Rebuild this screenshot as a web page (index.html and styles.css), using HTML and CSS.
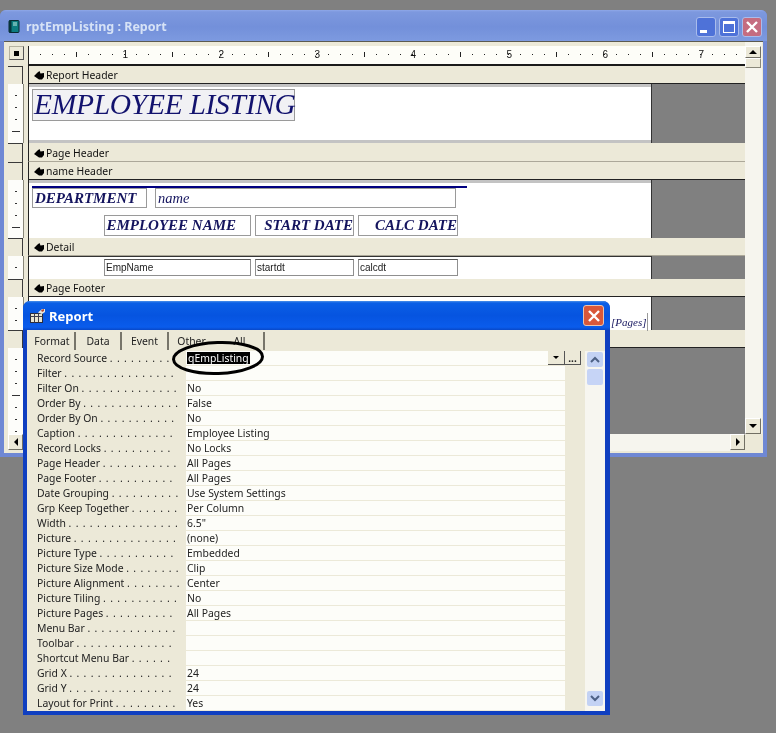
FILE: index.html
```html
<!DOCTYPE html>
<html lang="en">
<head>
<meta charset="utf-8">
<title>rptEmpListing : Report</title>
<link rel="stylesheet" href="styles.css">
</head>
<body>
<div class="desktop">

  <section class="report-win">
    <header class="win-title">
      <svg class="book" width="12" height="13" viewBox="0 0 12 13"><rect x="1" y="0.5" width="10" height="12" rx="1" fill="#0d7c80" stroke="#0a2a30"/><rect x="1" y="0.5" width="2.500" height="12" fill="#06343a"/><path d="M5 3h4M5 5h4" stroke="#bfe8e0"/></svg>
      <span class="win-name">rptEmpListing : Report</span>
      <div class="win-btns">
        <span class="wb wb-min"><i></i></span>
        <span class="wb wb-max"><i></i></span>
        <span class="wb wb-close"><svg width="16" height="16" viewBox="0 0 16 16"><path d="M3 3l10 10M13 3L3 13" stroke="#fff" stroke-width="2.400"/></svg></span>
      </div>
    </header>

    <div class="client">
      <div class="client-top">
        <div class="designer">
          <div class="h-ruler-row">
            <div class="corner"><i></i></div>
            <div class="h-ruler">
              <span>1</span><span>2</span><span>3</span><span>4</span><span>5</span><span>6</span><span>7</span>
            </div>
          </div>

          <div class="row"><div class="rule rule-bar"></div><div class="bar bar-18 bar-line"><svg class="hand" width="10" height="9" viewBox="0 0 10 9"><path d="M0 5L3.500 1.500 5.500 0 6.500 2.500 10 2 10 6 8 8.500 5 8.500z" fill="#000"/></svg>Report Header</div></div>

          <div class="row"><div class="rule rule-ticks"></div><div class="canvas c-59"><div class="paper strips">
            <div class="ctl title-ctl">EMPLOYEE LISTING</div>
          </div></div></div>

          <div class="row"><div class="rule rule-bar"></div><div class="bar bar-19"><svg class="hand" width="10" height="9" viewBox="0 0 10 9"><path d="M0 5L3.500 1.500 5.500 0 6.500 2.500 10 2 10 6 8 8.500 5 8.500z" fill="#000"/></svg>Page Header</div></div>

          <div class="row"><div class="rule rule-bar"></div><div class="bar bar-18 bar-line"><svg class="hand" width="10" height="9" viewBox="0 0 10 9"><path d="M0 5L3.500 1.500 5.500 0 6.500 2.500 10 2 10 6 8 8.500 5 8.500z" fill="#000"/></svg>name Header</div></div>

          <div class="row"><div class="rule rule-ticks"></div><div class="canvas c-58"><div class="paper strip-top">
            <div class="rule-line"></div>
            <div class="ctl dept-ctl">DEPARTMENT</div>
            <div class="ctl name-ctl">name</div>
            <div class="ctl head-ctl emp-col">EMPLOYEE NAME</div>
            <div class="ctl head-ctl start-col">START DATE</div>
            <div class="ctl head-ctl calc-col">CALC DATE</div>
          </div></div></div>

          <div class="row"><div class="rule rule-bar"></div><div class="bar bar-18"><svg class="hand" width="10" height="9" viewBox="0 0 10 9"><path d="M0 5L3.500 1.500 5.500 0 6.500 2.500 10 2 10 6 8 8.500 5 8.500z" fill="#000"/></svg>Detail</div></div>

          <div class="row"><div class="rule rule-ticks"></div><div class="canvas c-23"><div class="paper dark-top">
            <div class="ctl field-ctl emp-col">EmpName</div>
            <div class="ctl field-ctl start-col">startdt</div>
            <div class="ctl field-ctl calc-col">calcdt</div>
          </div></div></div>

          <div class="row"><div class="rule rule-bar"></div><div class="bar bar-18 bar-line"><svg class="hand" width="10" height="9" viewBox="0 0 10 9"><path d="M0 5L3.500 1.500 5.500 0 6.500 2.500 10 2 10 6 8 8.500 5 8.500z" fill="#000"/></svg>Page Footer</div></div>

          <div class="row"><div class="rule rule-ticks"></div><div class="canvas c-33"><div class="paper">
            <div class="ctl pages-ctl">[Pages]</div>
          </div></div></div>

          <div class="row"><div class="rule rule-bar"></div><div class="bar bar-18 bar-line"></div></div>

          <div class="row"><div class="rule rule-ticks"></div><div class="canvas c-86"></div></div>
        </div>

        <div class="v-scroll">
          <span class="sb-btn sb-v"><b class="tri tri-up"></b></span>
          <span class="sb-thumb"></span>
          <span class="sb-track"></span>
          <span class="sb-btn sb-v"><b class="tri tri-down"></b></span>
        </div>
      </div>

      <div class="h-scroll">
        <span class="sb-btn sb-h"><b class="tri tri-left"></b></span>
        <span class="sb-track"></span>
        <span class="sb-btn sb-h"><b class="tri tri-right"></b></span>
      </div>
    </div>
  </section>

  <section class="prop-win">
    <header class="prop-title">
      <svg class="prop-icon" width="16" height="15" viewBox="0 0 16 15"><rect x="0.500" y="5.500" width="12" height="9" fill="#e8e4d0" stroke="#2b2b3a"/><path d="M0.500 8.500h12M4.500 5.500v9M8.500 5.500v9" stroke="#3d3d4d"/><path d="M8 4.500L12 1h3v3l-3 2z" fill="#e8e8e0"/><path d="M11 2l3-1v2l-2 1z" fill="#b84a30"/></svg>
      <span class="prop-name">Report</span>
      <span class="prop-close"><svg width="16" height="16" viewBox="0 0 16 16"><path d="M3 3l10 10M13 3L3 13" stroke="#fff" stroke-width="2.400"/></svg></span>
    </header>
    <div class="prop-body">
      <nav class="tabs">
        <span class="tab tab-format">Format</span>
        <span class="tab tab-data">Data</span>
        <span class="tab tab-event">Event</span>
        <span class="tab tab-other">Other</span>
        <span class="tab tab-all">All</span>
      </nav>
      <div class="prop-main">
        <div class="sheet">
          <div class="prow"><span class="pl">Record Source <span class="dots">. . . . . . . . .</span></span><span class="pv"><mark class="sel">qEmpListing</mark><span class="combo"><span class="combo-btn"><b class="tri tri-down tri-small"></b></span><span class="combo-btn combo-dots">...</span></span></span></div>
          <div class="prow"><span class="pl">Filter <span class="dots">. . . . . . . . . . . . . . . .</span></span><span class="pv"></span></div>
          <div class="prow"><span class="pl">Filter On <span class="dots">. . . . . . . . . . . . . .</span></span><span class="pv">No</span></div>
          <div class="prow"><span class="pl">Order By <span class="dots">. . . . . . . . . . . . . .</span></span><span class="pv">False</span></div>
          <div class="prow"><span class="pl">Order By On <span class="dots">. . . . . . . . . . .</span></span><span class="pv">No</span></div>
          <div class="prow"><span class="pl">Caption <span class="dots">. . . . . . . . . . . . . .</span></span><span class="pv">Employee Listing</span></div>
          <div class="prow"><span class="pl">Record Locks <span class="dots">. . . . . . . . . .</span></span><span class="pv">No Locks</span></div>
          <div class="prow"><span class="pl">Page Header <span class="dots">. . . . . . . . . . .</span></span><span class="pv">All Pages</span></div>
          <div class="prow"><span class="pl">Page Footer <span class="dots">. . . . . . . . . . .</span></span><span class="pv">All Pages</span></div>
          <div class="prow"><span class="pl">Date Grouping <span class="dots">. . . . . . . . . .</span></span><span class="pv">Use System Settings</span></div>
          <div class="prow"><span class="pl">Grp Keep Together <span class="dots">. . . . . . .</span></span><span class="pv">Per Column</span></div>
          <div class="prow"><span class="pl">Width <span class="dots">. . . . . . . . . . . . . . . .</span></span><span class="pv">6.5"</span></div>
          <div class="prow"><span class="pl">Picture <span class="dots">. . . . . . . . . . . . . . .</span></span><span class="pv">(none)</span></div>
          <div class="prow"><span class="pl">Picture Type <span class="dots">. . . . . . . . . . .</span></span><span class="pv">Embedded</span></div>
          <div class="prow"><span class="pl">Picture Size Mode <span class="dots">. . . . . . . .</span></span><span class="pv">Clip</span></div>
          <div class="prow"><span class="pl">Picture Alignment <span class="dots">. . . . . . . .</span></span><span class="pv">Center</span></div>
          <div class="prow"><span class="pl">Picture Tiling <span class="dots">. . . . . . . . . . .</span></span><span class="pv">No</span></div>
          <div class="prow"><span class="pl">Picture Pages <span class="dots">. . . . . . . . . .</span></span><span class="pv">All Pages</span></div>
          <div class="prow"><span class="pl">Menu Bar <span class="dots">. . . . . . . . . . . . .</span></span><span class="pv"></span></div>
          <div class="prow"><span class="pl">Toolbar <span class="dots">. . . . . . . . . . . . . .</span></span><span class="pv"></span></div>
          <div class="prow"><span class="pl">Shortcut Menu Bar <span class="dots">. . . . . .</span></span><span class="pv"></span></div>
          <div class="prow"><span class="pl">Grid X <span class="dots">. . . . . . . . . . . . . . .</span></span><span class="pv">24</span></div>
          <div class="prow"><span class="pl">Grid Y <span class="dots">. . . . . . . . . . . . . . .</span></span><span class="pv">24</span></div>
          <div class="prow"><span class="pl">Layout for Print <span class="dots">. . . . . . . . .</span></span><span class="pv">Yes</span></div>
        </div>
        <div class="prop-scroll">
          <span class="xp-btn"><svg width="10" height="7" viewBox="0 0 10 7"><path d="M1 6l4-4 4 4" fill="none" stroke="#4d6185" stroke-width="2"/></svg></span>
          <span class="xp-thumb"></span>
          <span class="xp-track"></span>
          <span class="xp-btn"><svg width="10" height="7" viewBox="0 0 10 7"><path d="M1 1l4 4 4-4" fill="none" stroke="#4d6185" stroke-width="2"/></svg></span>
        </div>
      </div>
      <svg class="ellipse" width="96" height="38" viewBox="0 0 96 38"><ellipse cx="48" cy="19" rx="44.500" ry="15.500" transform="rotate(-2 48 19)" fill="none" stroke="#000" stroke-width="3"/></svg>
    </div>
  </section>

</div>
</body>
</html>
```

FILE: styles.css
```css
* { box-sizing: border-box; }

html, body {
  margin: 0;
  padding: 0;
  background: #808080;
}

.desktop {
  position: relative;
  width: 776px;
  height: 733px;
  overflow: hidden;
  background: #808080;
  font-family: "Noto Sans", "Liberation Sans", sans-serif;
  font-size: 10.4px;
  color: #111;
  filter: blur(0.35px);
}

/* ---------- report window ---------- */
.report-win {
  position: absolute;
  left: 0;
  top: 10px;
  width: 767px;
  height: 447px;
  display: flex;
  flex-direction: column;
  background: #6f88d4;
  border-radius: 6px 6px 0 0;
  padding: 0 4px 4px 4px;
}

.win-title {
  height: 31px;
  margin: 0 -4px;
  padding: 0 5px 0 8px;
  display: flex;
  align-items: center;
  gap: 6px;
  border-radius: 6px 6px 0 0;
  background: linear-gradient(#8fa8e8 0, #7d98de 2px, #7390da 55%, #7d9ae0 100%);
}

.book { flex: none; margin-top: 2px; }

.win-name {
  font-family: "Noto Sans", sans-serif;
  font-weight: 700;
  font-size: 12.5px;
  line-height: 16px;
  color: #d6e2f6;
  margin-top: 3px;
}

.win-btns {
  margin-left: auto;
  display: flex;
  gap: 3px;
  margin-top: 3px;
}

.wb {
  width: 20px;
  height: 20px;
  border-radius: 3px;
  border: 1px solid #a9bcec;
  display: flex;
  align-items: center;
  justify-content: center;
  background: #4e72d8;
  position: relative;
}

.wb-close { background: #c56c80; }

.wb-min i {
  width: 7px;
  height: 3px;
  background: #fff;
  align-self: flex-end;
  margin: 0 5px 3px 0;
}

.wb-max i {
  width: 12px;
  height: 12px;
  border: 1px solid #fff;
  border-top-width: 3px;
}

.client {
  flex: 1;
  display: flex;
  flex-direction: column;
  background: #ece9d8;
  min-height: 0;
  border-top: 1px solid #5b5a50;
  padding-right: 1px;
}

.client-top {
  height: 392px;
  display: flex;
}

.designer {
  width: 741px;
  display: flex;
  flex-direction: column;
  flex: none;
}

.h-ruler-row {
  height: 24px;
  display: flex;
  flex: none;
}

.corner {
  width: 15px;
  height: 14px;
  margin: 4px 0 0 5px;
  display: flex;
  align-items: center;
  justify-content: center;
  background: #ece9d8;
  border: 1px solid #b5b2a0;
  border-right-color: #555;
  border-bottom-color: #555;
}

.corner i {
  width: 5px;
  height: 5px;
  background: #000;
}

.h-ruler {
  margin: 4px 0 0 4px;
  flex: 1;
  display: flex;
  padding-left: 3px;
  height: 20px;
  background-color: #fdfdf8;
  border-left: 1px solid #222;
  border-bottom: 2px solid #1a1a1a;
  background-image:
    linear-gradient(to right, transparent 47px, #222 47px, #222 48px, transparent 48px),
    linear-gradient(to right, transparent 11px, #222 11px, #222 12px);
  background-size: 96px 5px, 12px 1px;
  background-position: 0 6px, 0 8px;
  background-repeat: repeat-x, repeat-x;
}

.h-ruler span {
  width: 96px;
  flex: none;
  text-align: right;
  font-family: "Liberation Sans", sans-serif;
  font-size: 10px;
  line-height: 17px;
  color: #111;
}

.row {
  display: flex;
  flex: none;
}

.rule {
  width: 20px;
  margin-left: 4px;
  flex: none;
  border-right: 1px solid #777;
  background-color: #ece9d8;
}

.rule-bar {
  background: linear-gradient(#3a3a3a, #3a3a3a) 0 0 / 15px 1px no-repeat,
              linear-gradient(#3a3a3a, #3a3a3a) 14px 0 / 1px 100% no-repeat,
              #ece9d8;
  border-right: 1px solid #ece9d8;
}

.rule-ticks {
  width: 15px;
  margin-right: 5px;
  background-color: #fdfdfa;
  background-image:
    linear-gradient(to bottom, transparent 11px, #333 11px, #333 12px),
    linear-gradient(to bottom, transparent 47px, #333 47px, #333 48px);
  background-size: 2px 12px, 8px 48px;
  background-position: 7px 0, 4px 0;
  background-repeat: repeat-y;
  border-right: 0;
  box-shadow: 1px 0 0 #8a887a;
}

.bar {
  width: 717px;
  flex: none;
  display: flex;
  align-items: center;
  gap: 2px;
  padding: 2px 0 0 5px;
  background: #ece9d8;
  border-left: 1px solid #222;
  border-bottom: 1px solid #aca899;
  font-size: 10.4px;
  line-height: 1;
  color: #111;
}

.bar-18 { height: 18px; }
.bar-19 { height: 19px; padding-top: 3px; }
.bar-line { border-bottom-color: #222; }

.hand { flex: none; }

.canvas {
  width: 717px;
  flex: none;
  display: flex;
  background: #808080;
  border-left: 1px solid #222;
}

.c-59 { height: 59px; }
.c-58 { height: 58px; }
.c-23 { height: 23px; }
.c-33 { height: 33px; }
.c-86 { height: 86px; }

.paper {
  position: relative;
  width: 623px;
  height: 100%;
  flex: none;
  background: #fff;
  border-right: 1px solid #333;
}

.strips { box-shadow: inset 0 3px #c3c3c3, inset 0 -3px #c3c3c3; }
.strip-top { box-shadow: inset 0 3px #c3c3c3; }
.dark-top { box-shadow: inset 0 1px #333; }

.ctl {
  position: absolute;
  display: flex;
  align-items: center;
  white-space: nowrap;
  border: 1px solid #9a9a9a;
}

.title-ctl {
  left: 3px;
  top: 5px;
  width: 263px;
  height: 32px;
  background: #f1f1f4;
  font-family: "Liberation Serif", serif;
  font-style: italic;
  font-size: 29.5px;
  letter-spacing: -0.3px;
  color: #12126e;
  padding-left: 1px;
  padding-bottom: 2px;
}

.rule-line {
  position: absolute;
  left: 3px;
  top: 6px;
  width: 435px;
  height: 2px;
  background: #000080;
}

.dept-ctl {
  left: 3px;
  top: 8px;
  width: 115px;
  height: 20px;
  font-family: "Liberation Serif", serif;
  font-style: italic;
  font-weight: 700;
  font-size: 15px;
  color: #14145e;
  padding-left: 2px;
}

.name-ctl {
  left: 126px;
  top: 8px;
  width: 301px;
  height: 20px;
  font-family: "Liberation Serif", serif;
  font-style: italic;
  font-size: 14.5px;
  color: #14145e;
  padding-left: 2px;
}

.emp-col { left: 75px; width: 147px; }
.start-col { left: 226px; width: 99px; }
.calc-col { left: 329px; width: 100px; }

.head-ctl {
  top: 35px;
  height: 21px;
  justify-content: flex-end;
  font-family: "Liberation Serif", serif;
  font-style: italic;
  font-weight: 700;
  font-size: 15px;
  color: #14145e;
  padding-right: 0;
}

.emp-col.head-ctl { padding-right: 14px; }

.field-ctl {
  top: 3px;
  height: 17px;
  font-family: "Liberation Sans", sans-serif;
  font-size: 10px;
  color: #222;
  padding-left: 1px;
  border-color: #8f8f8f;
  border-top-color: #555;
}

.pages-ctl {
  right: 3px;
  top: 16px;
  width: 37px;
  height: 18px;
  border-width: 0 1px 0 0;
  font-family: "Liberation Serif", serif;
  font-style: italic;
  font-size: 11px;
  color: #14145e;
}

.v-scroll {
  width: 17px;
  flex: none;
  display: flex;
  flex-direction: column;
  padding-top: 4px;
  background: #f5f4ec;
}

.sb-btn {
  flex: none;
  display: flex;
  align-items: center;
  justify-content: center;
  background: #ece9d8;
  border: 1px solid;
  border-color: #fff #716f64 #716f64 #fff;
}

.sb-v { height: 16px; width: 16px; }
.sb-v:first-child { height: 12px; }
.sb-h { width: 15px; height: 16px; }

.sb-thumb {
  flex: none;
  height: 10px;
  width: 16px;
  background: #ece9d8;
  border: 1px solid;
  border-color: #fff #8a887a #8a887a #fff;
}

.sb-track {
  flex: 1;
  background: #f6f5ee;
}

.tri {
  width: 0;
  height: 0;
  display: block;
  border-style: solid;
  border-color: transparent;
}

.tri-up { border-width: 0 4px 4px 4px; border-bottom-color: #000; }
.tri-down { border-width: 4px 4px 0 4px; border-top-color: #000; }
.tri-left { border-width: 4px 4px 4px 0; border-right-color: #000; }
.tri-right { border-width: 4px 0 4px 4px; border-left-color: #000; }
.tri-small { border-width: 3px 3px 0 3px; }

.h-scroll {
  height: 17px;
  display: flex;
  padding: 0 17px 0 4px;
  flex: none;
}

/* ---------- properties window ---------- */
.prop-win {
  position: absolute;
  left: 23px;
  top: 301px;
  width: 587px;
  height: 414px;
  display: flex;
  flex-direction: column;
  background: #0f3fc0;
  border-radius: 7px 7px 0 0;
  padding: 0 5px 4px 4px;
}

.prop-title {
  height: 29px;
  margin: 0 -5px 0 -4px;
  padding: 0 6px 0 7px;
  display: flex;
  align-items: center;
  gap: 3px;
  flex: none;
  border-radius: 7px 7px 0 0;
  background: linear-gradient(#4a90e8 0, #0a5fe6 2px, #0654e0 50%, #0a5cec 90%, #0848c8 100%);
}

.prop-name {
  font-family: "Noto Sans", sans-serif;
  font-weight: 700;
  font-size: 13px;
  line-height: 16px;
  color: #fff;
}

.prop-close {
  margin-left: auto;
  width: 21px;
  height: 21px;
  display: flex;
  align-items: center;
  justify-content: center;
  border-radius: 3px;
  border: 1px solid #e8c4b0;
  background: #d9583a;
}

.prop-body {
  position: relative;
  flex: 1;
  min-height: 0;
  display: flex;
  flex-direction: column;
  background: #ece9d8;
  padding-left: 3px;
}

.tabs {
  height: 21px;
  display: flex;
  flex: none;
  align-items: center;
  font-size: 10.4px;
  color: #222;
}

.tab {
  height: 18px;
  display: flex;
  align-items: center;
  justify-content: center;
  border-right: 2px solid #77756a;
}

.tab-format { width: 46px; }
.tab-data { width: 46px; }
.tab-event { width: 47px; }
.tab-other { width: 47px; border-right-color: transparent; }
.tab-all { width: 49px; }

.prop-main {
  flex: 1;
  min-height: 0;
  display: flex;
}

.sheet {
  flex: 1;
  min-width: 0;
  padding-right: 20px;
}

.prow {
  height: 15px;
  display: flex;
}

.pl {
  width: 156px;
  flex: none;
  padding-left: 7px;
  white-space: nowrap;
  line-height: 14px;
  font-size: 10.4px;
  color: #222;
}

.dots { word-spacing: 1.6px; }

.pv {
  flex: 1;
  display: flex;
  align-items: center;
  height: 14px;
  padding-left: 1px;
  background: #fdfdf9;
  font-size: 10.4px;
  line-height: 14px;
  color: #222;
}

.sel {
  background: #000;
  color: #fff;
  line-height: 12px;
  padding: 0 1px;
}

.combo {
  margin-left: auto;
  display: flex;
  height: 14px;
  margin-right: -16px;
}

.combo-btn {
  width: 17px;
  height: 14px;
  display: flex;
  align-items: center;
  justify-content: center;
  background: #ece9d8;
  border-right: 1px solid #555;
  border-bottom: 1px solid #555;
  font-weight: 700;
  font-size: 10px;
  line-height: 8px;
}

.combo-dots { width: 16px; }

.prop-scroll {
  width: 20px;
  flex: none;
  display: flex;
  flex-direction: column;
  align-items: center;
  padding: 1px 0 5px;
  background: #f7f6f0;
}

.xp-btn {
  width: 16px;
  height: 15px;
  flex: none;
  display: flex;
  align-items: center;
  justify-content: center;
  background: #c3d2f4;
  border-radius: 2px;
}

.xp-thumb {
  width: 16px;
  height: 16px;
  flex: none;
  margin-top: 2px;
  background: #c6d4f6;
  border-radius: 2px;
}

.xp-track { flex: 1; }

.ellipse {
  position: absolute;
  left: 143px;
  top: 9px;
}
```
